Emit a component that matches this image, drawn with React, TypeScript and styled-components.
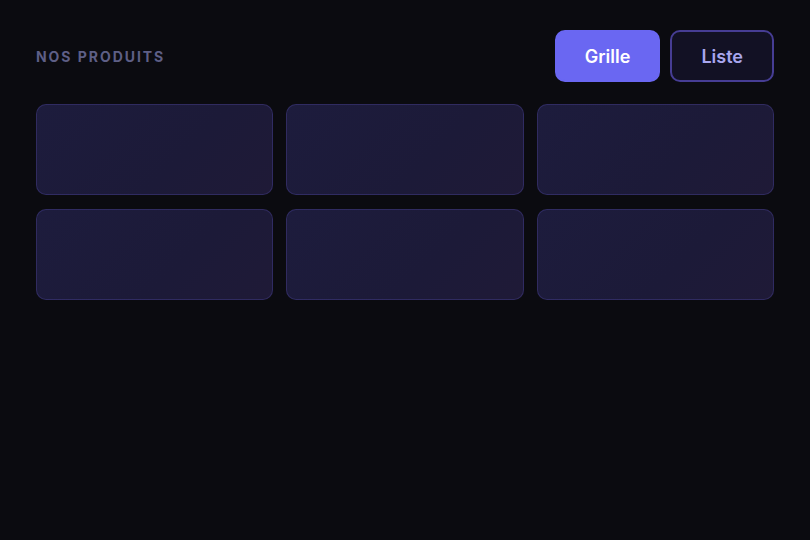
import React, { useState } from "react";
import styled, { createGlobalStyle } from "styled-components";

type View = "grid" | "list";

const products = Array.from({ length: 6 }, (_, i) => ({ id: i + 1 }));

export default function App() {
  const [view, setView] = useState<View>("grid");

  return (
    <>
      <GlobalStyle />
      <Page>
        <Header>
          <Title>Nos produits</Title>
          <Toggle>
            <ToggleButton $active={view === "grid"} onClick={() => setView("grid")}>
              Grille
            </ToggleButton>
            <ToggleButton $active={view === "list"} onClick={() => setView("list")}>
              Liste
            </ToggleButton>
          </Toggle>
        </Header>
        <Grid $view={view}>
          {products.map((p) => (
            <Card key={p.id} />
          ))}
        </Grid>
      </Page>
    </>
  );
}

const GlobalStyle = createGlobalStyle`
  html, body {
    margin: 0;
    background: #0b0b10;
    font-family: Inter, "Noto Sans", sans-serif;
  }
`;

const Page = styled.div`
  min-height: 540px;
  box-sizing: border-box;
  padding: 30px 36px;
  background: #0b0b10;
`;

const Header = styled.div`
  display: flex;
  align-items: center;
  justify-content: space-between;
  margin-bottom: 22px;
`;

const Title = styled.h2`
  margin: 0;
  font-size: 14px;
  font-weight: 700;
  letter-spacing: 1.95px;
  text-transform: uppercase;
  color: #5e5f86;
`;

const Toggle = styled.div`
  display: flex;
  gap: 10px;
`;

const ToggleButton = styled.button<{ $active: boolean }>`
  height: 52px;
  padding: 0 ${(p) => (p.$active ? "28px" : "29px")};
  border-radius: 10px;
  font-family: inherit;
  font-size: 18px;
  font-weight: 600;
  cursor: pointer;
  border: 2px solid ${(p) => (p.$active ? "#6a67f2" : "#463d94")};
  background: ${(p) => (p.$active ? "#6a67f2" : "#121124")};
  color: ${(p) => (p.$active ? "#ffffff" : "#a8a6ee")};
`;

const Grid = styled.div<{ $view: View }>`
  display: grid;
  grid-template-columns: ${(p) => (p.$view === "grid" ? "repeat(3, 1fr)" : "1fr")};
  column-gap: 13px;
  row-gap: 14px;
`;

const Card = styled.div`
  height: 91px;
  box-sizing: border-box;
  border-radius: 10px;
  border: 1px solid rgba(92, 84, 190, 0.3);
  background: linear-gradient(135deg, #1d1c3d 0%, #1c1a38 60%, #1f1a37 100%);
`;
